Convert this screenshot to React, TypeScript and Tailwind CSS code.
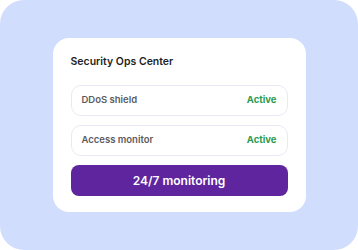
const rows = [
  { name: 'DDoS shield', status: 'Active' },
  { name: 'Access monitor', status: 'Active' },
]

export default function App() {
  return (
    <div className="w-[358px] h-[250px] bg-white font-['Inter',sans-serif]">
      <div className="w-full h-full rounded-[24px] bg-[#d1ddfd] flex items-center justify-center">
        <div className="w-[253px] h-[174px] rounded-[16px] bg-white px-[18px] pt-[16px] pb-[17px] flex flex-col">
          <div className="text-[10.5px] font-semibold text-[#1f1f24] leading-[16px]">
            Security Ops Center
          </div>
          <div className="mt-[15px] flex flex-col gap-[9px]">
            {rows.map((row) => (
              <div
                key={row.name}
                className="h-[31px] rounded-[10px] border border-[#ebe8f6] flex items-center justify-between pl-[10px] pr-[10px]"
              >
                <span className="text-[9.5px] font-semibold text-[#5b5b62]">{row.name}</span>
                <span className="text-[9.5px] font-bold text-[#2c9a4c]">{row.status}</span>
              </div>
            ))}
            <div className="h-[31px] rounded-[8px] bg-[#5e259e] flex items-center justify-center text-white text-[12px] font-semibold">
              24/7 monitoring
            </div>
          </div>
        </div>
      </div>
    </div>
  )
}
